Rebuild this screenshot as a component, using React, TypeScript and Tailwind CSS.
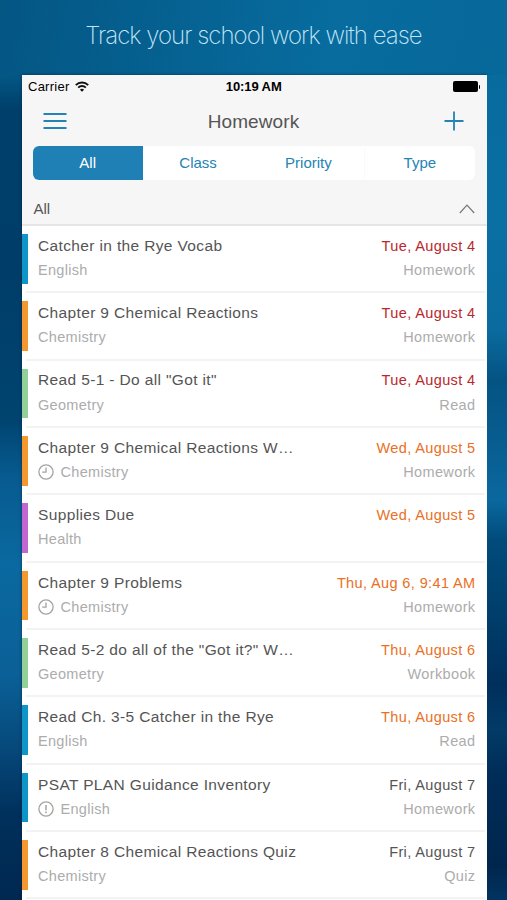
type Task = {
  title: string;
  course: string;
  date: string;
  kind?: string;
  bar: string;
  tone: string;
  icon?: "clock" | "alert";
};

const BLUE = "bg-[#0e96c8]";
const ORANGE = "bg-[#f2982e]";
const GREEN = "bg-[#93cf98]";
const PURPLE = "bg-[#c266d2]";
const LATE = "text-[#b9272c]";
const SOON = "text-[#ea6f24]";
const LATER = "text-[#555555]";

const tasks: Task[] = [
  { title: "Catcher in the Rye Vocab", course: "English", date: "Tue, August 4", kind: "Homework", bar: BLUE, tone: LATE },
  { title: "Chapter 9 Chemical Reactions", course: "Chemistry", date: "Tue, August 4", kind: "Homework", bar: ORANGE, tone: LATE },
  { title: 'Read 5-1 - Do all "Got it"', course: "Geometry", date: "Tue, August 4", kind: "Read", bar: GREEN, tone: LATE },
  { title: "Chapter 9 Chemical Reactions W…", course: "Chemistry", date: "Wed, August 5", kind: "Homework", bar: ORANGE, tone: SOON, icon: "clock" },
  { title: "Supplies Due", course: "Health", date: "Wed, August 5", bar: PURPLE, tone: SOON },
  { title: "Chapter 9 Problems", course: "Chemistry", date: "Thu, Aug 6, 9:41 AM", kind: "Homework", bar: ORANGE, tone: SOON, icon: "clock" },
  { title: 'Read 5-2 do all of the "Got it?" W…', course: "Geometry", date: "Thu, August 6", kind: "Workbook", bar: GREEN, tone: SOON },
  { title: "Read Ch. 3-5 Catcher in the Rye", course: "English", date: "Thu, August 6", kind: "Read", bar: BLUE, tone: SOON },
  { title: "PSAT PLAN Guidance Inventory", course: "English", date: "Fri, August 7", kind: "Homework", bar: BLUE, tone: LATER, icon: "alert" },
  { title: "Chapter 8 Chemical Reactions Quiz", course: "Chemistry", date: "Fri, August 7", kind: "Quiz", bar: ORANGE, tone: LATER },
];

function StatusIcon({ name }: { name: "clock" | "alert" }) {
  return (
    <svg viewBox="0 0 16 16" className="mr-[6.5px] size-4 shrink-0" fill="none" stroke="#a3a3a3" strokeWidth="1.3">
      <circle cx="8" cy="8" r="7.1" />
      {name === "clock" ? <path d="M8 3.6V8.2H4.2" /> : <path d="M8 4v5.2M8 10.6v1.6" strokeWidth="1.5" />}
    </svg>
  );
}

function Row({ task }: { task: Task }) {
  return (
    <li className="flex h-[67.35px] shrink-0">
      <div className={`mt-[8px] h-[49.5px] w-[6px] shrink-0 ${task.bar}`} />
      <div className="ml-[-2px] mr-[2px] flex min-w-0 flex-1 border-b-2 border-[#f3f3f3] pl-[12.5px] pr-[9px] pt-[9.8px]">
        <div className="flex-1">
          <div className="h-[20px] whitespace-nowrap text-[15.5px] leading-[20px] tracking-[0.36px] text-[#555555]">{task.title}</div>
          <div className="mt-[4.2px] flex h-[20px] items-center whitespace-nowrap text-[14.5px] leading-[20px] tracking-[0.3px] text-[#acacac]">
            {task.icon && <StatusIcon name={task.icon} />}
            {task.course}
          </div>
        </div>
        <div className="whitespace-nowrap text-right text-[14.5px] leading-[20px] tracking-[0.38px]">
          <div className={task.tone}>{task.date}</div>
          <div className="mt-[4.2px] text-[#acacac]">{task.kind}</div>
        </div>
      </div>
    </li>
  );
}

export default function App() {
  return (
    <div className="flex h-[900px] w-[507px] flex-col overflow-hidden bg-[#075f93] font-['Liberation_Sans',Arial,sans-serif]">
      <h1 className="flex h-[75px] items-center justify-center bg-[linear-gradient(100deg,#045683_0%,#05608f_30%,#086c9f_65%,#07689a_100%)] pb-1 font-['Inter',sans-serif] text-[24px] font-extralight tracking-[-0.98px] text-[#c5e6f8]">
        Track your school work with ease
      </h1>
      <div className="flex min-h-0 flex-1">
        <div className="w-[21.5px] shrink-0 bg-[linear-gradient(180deg,#045784_0px,#003f6b_35px,#003e69_200px,#004470_345px,#075a8f_400px,#0a69a0_490px,#0a6097_600px,#064a7c_670px,#00305c_740px,#002850_825px)]" />
        <main className="flex w-[465px] shrink-0 flex-col overflow-hidden bg-white shadow-[0_0_3px_rgba(0,20,50,0.6)]">
          <header className="h-[151px] shrink-0 border-b-2 border-[#e6e6e6] bg-[#f6f6f6]">
            <div className="flex h-[23px] items-center justify-between pl-[6.5px] pr-[6px] text-[13px] text-black">
              <div className="flex w-[100px] items-center gap-[6px] tracking-[0.25px]">
                Carrier
                <svg viewBox="0 0 14 11" className="h-[11px] w-[14px]" fill="none" stroke="#111" strokeWidth="1.9">
                  <path d="M.8 4.1a8.8 8.8 0 0 1 12.4 0M3.2 6.6a5.4 5.4 0 0 1 7.6 0" />
                  <path d="M7 10.8 4.9 8.7a3 3 0 0 1 4.2 0z" fill="#111" stroke="none" />
                </svg>
              </div>
              <span className="pr-px font-bold tracking-[-0.1px]">10:19 AM</span>
              <div className="flex w-[100px] items-center justify-end gap-px">
                <div className="h-[11px] w-[25px] rounded-[2px] bg-black" />
                <div className="h-1 w-[1.5px] rounded-r bg-black" />
              </div>
            </div>
            <div className="flex h-[48px] items-center justify-between pl-[21.5px] pr-[22.5px]">
              <svg viewBox="0 0 24 18" className="mb-[2px] h-[18px] w-6" stroke="#2583b3" strokeWidth="1.8">
                <path d="M.5 2h23M.5 9h23M.5 16h23" />
              </svg>
              <h2 className="pr-[4px] pt-px text-[19px] tracking-[0.1px] text-[#555555]">Homework</h2>
              <svg viewBox="0 0 20 20" className="mb-[2px] size-5" stroke="#2583b3" strokeWidth="1.8">
                <path d="M10 .5v19M.5 10h19" />
              </svg>
            </div>
            <nav className="ml-[11px] mr-[11.5px] flex h-[34px] overflow-hidden rounded-[6px] bg-white pt-px text-[15px] text-[#2583b3]">
              <button className="-mt-px flex-1 bg-[#1f80b5] pt-px text-white">All</button>
              <button className="flex-1">Class</button>
              <button className="flex-1">Priority</button>
              <button className="flex-1 border-l border-[#fafafa]">Type</button>
            </nav>
            <div className="flex h-[44px] items-center justify-between pl-[12px] pr-[11.5px] pt-[14px] text-[15px] text-[#555555]">
              All
              <svg viewBox="0 0 16 10" className="h-[10px] w-4" fill="none" stroke="#777" strokeWidth="1.2">
                <path d="M.8 9 8 1.2 15.2 9" />
              </svg>
            </div>
          </header>
          <ul className="flex flex-col">
            {tasks.map((task) => (
              <Row key={task.title} task={task} />
            ))}
          </ul>
        </main>
        <div className="flex-1 bg-[linear-gradient(180deg,#076b9e_0px,#0a6fa3_150px,#0a6b9e_255px,#045383_305px,#075a8c_350px,#0a689e_425px,#014b7a_465px,#00406d_530px,#002f5c_610px,#013b66_655px,#002c58_700px,#00264d_790px,#013360_825px)]" />
      </div>
    </div>
  );
}
